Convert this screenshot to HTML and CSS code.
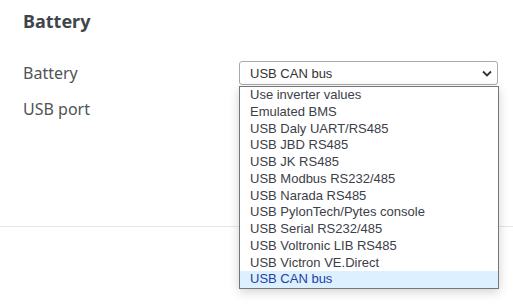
FILE: index.html
```html
<!DOCTYPE html>
<html>
<head>
  <title>Battery</title>
  <link rel="stylesheet" href="styles.css">
</head>
<body>
  <div class="section">
    <h2 class="section-title">Battery</h2>

    <div class="form-row">
      <label class="form-label">Battery</label>
      <div class="select-wrap">
        <div class="select-box">
          <span>USB CAN bus</span>
          <svg class="chevron" width="10" height="7" viewBox="0 0 10 7">
            <path d="M1 1.5 L5 5.5 L9 1.5" fill="none" stroke="#333" stroke-width="1.8"/>
          </svg>
        </div>
        <ul class="select-list">
          <li>Use inverter values</li>
          <li>Emulated BMS</li>
          <li>USB Daly UART/RS485</li>
          <li>USB JBD RS485</li>
          <li>USB JK RS485</li>
          <li>USB Modbus RS232/485</li>
          <li>USB Narada RS485</li>
          <li>USB PylonTech/Pytes console</li>
          <li>USB Serial RS232/485</li>
          <li>USB Voltronic LIB RS485</li>
          <li>USB Victron VE.Direct</li>
          <li class="selected">USB CAN bus</li>
        </ul>
      </div>
    </div>

    <div class="form-row">
      <label class="form-label">USB port</label>
    </div>
  </div>
  <hr class="divider">
</body>
</html>
```

FILE: styles.css
```css
html, body {
  min-height: 305px;
}

body {
  margin: 0;
  background: #fff;
  font-family: "Noto Sans", "Open Sans", sans-serif;
  color: #444;
}

.section {
  padding: 8px 0 0 23px;
  height: 218px;
}

.section-title {
  margin: 0 0 21px 0;
  font-size: 18px;
  font-weight: 700;
  color: #40454b;
  line-height: 26px;
}

.form-row {
  display: flex;
  align-items: center;
  height: 36px;
}

.form-label {
  width: 216px;
  font-size: 16px;
  color: #505458;
}

.select-wrap {
  position: relative;
}

.select-box {
  box-sizing: border-box;
  width: 259px;
  height: 24px;
  border: 1px solid #aaa;
  border-radius: 3px;
  background: #fff;
  display: flex;
  align-items: center;
  justify-content: space-between;
  padding: 0 5px 0 10px;
  font-family: "Liberation Sans", Arial, sans-serif;
  font-size: 13px;
  color: #333;
}

.chevron {
  margin-top: 1px;
}

.select-list {
  position: absolute;
  top: 25px;
  left: 0;
  width: 260px;
  box-sizing: border-box;
  margin: 0;
  padding: 0;
  list-style: none;
  background: #fff;
  border: 1px solid #767676;
  box-shadow: 0 3px 10px rgba(0, 0, 0, 0.18);
  font-family: "Liberation Sans", Arial, sans-serif;
  font-size: 13px;
  color: #3c4048;
  z-index: 2;
}

.select-list li {
  height: 16.75px;
  line-height: 16.75px;
  padding-left: 10px;
  white-space: nowrap;
}

.select-list li.selected {
  background: #dcf0ff;
  color: #1c3fa8;
}

.divider {
  margin: 0;
  border: none;
  border-top: 1px solid #e6e6e6;
}
```
